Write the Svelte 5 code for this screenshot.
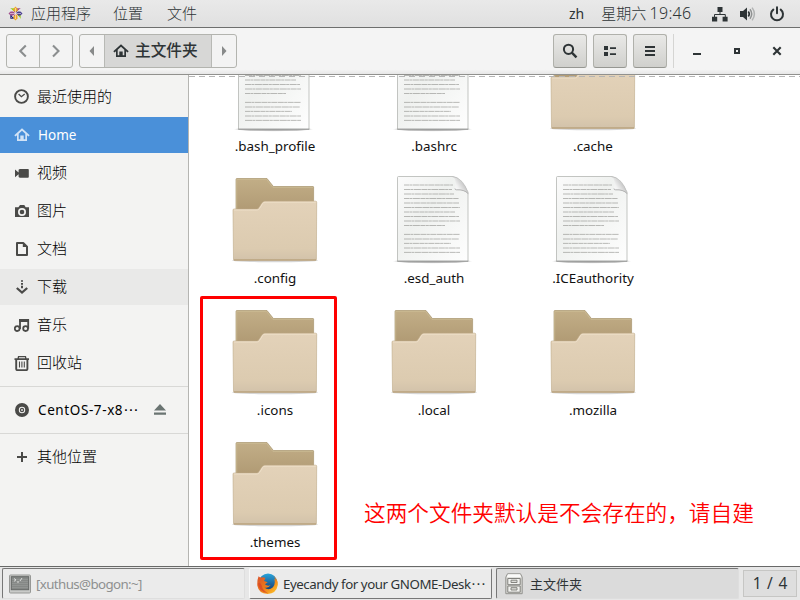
<script>
  const places = [
    { icon: 'recent', label: '最近使用的' },
    { icon: 'home', label: 'Home', active: true, latin: true },
    { icon: 'video', label: '视频' },
    { icon: 'camera', label: '图片' },
    { icon: 'doc', label: '文档' },
    { icon: 'download', label: '下载', hover: true },
    { icon: 'music', label: '音乐' },
    { icon: 'trash', label: '回收站' }
  ];
  const files = [
    { name: '.bash_profile', type: 'text' },
    { name: '.bashrc', type: 'text' },
    { name: '.cache', type: 'folder' },
    { name: '.config', type: 'folder' },
    { name: '.esd_auth', type: 'text' },
    { name: '.ICEauthority', type: 'text' },
    { name: '.icons', type: 'folder' },
    { name: '.local', type: 'folder' },
    { name: '.mozilla', type: 'folder' },
    { name: '.themes', type: 'folder' }
  ];
  const lines = [
    [15, 67], [19.5, 66], [24, 68], [28.5, 73], [33, 73], [37.5, 74], [42, 69], [46.5, 73], [51, 74], [55.5, 59],
    [64.4, 74], [69, 73], [73.4, 65], [78, 74], [82.4, 74]
  ];
</script>

{#snippet homeShape()}
  <path d="M8 1.2 0.3 8.3l1.2 1.3L3 8.3V14h10V8.3l1.5 1.3 1.2-1.3zM8 3.8l3.3 3V12.3H9.7V8.6H6.3v3.7H4.7V6.8z" fill-rule="evenodd" />
{/snippet}

{#snippet icon(name)}
  <svg class="ic" viewBox="0 0 16 16" width="16" height="16">
    {#if name === 'recent'}
      <circle cx="7.5" cy="7.5" r="6.4" fill="none" stroke="currentColor" stroke-width="1.9" />
      <path d="M4.6 5.1 7.4 7.7 10.7 5" fill="none" stroke="currentColor" stroke-width="1.3" />
    {:else if name === 'home'}
      {@render homeShape()}
    {:else if name === 'video'}
      <path d="M1 4.6 4.6 7.6V4.8L5.8 4H14q.8 0 .8.8v7q0 .9-.8.9H5.8l-1.2-.8V9.3L1 12.2z" />
    {:else if name === 'camera'}
      <path fill-rule="evenodd" d="M1 4.2h3.4L6 2h4.3l1.4 2.2H15V14H1zM8 5a4 4 0 1 0 0 8 4 4 0 0 0 0-8zm0 1.7a2.3 2.3 0 1 1 0 4.6 2.3 2.3 0 0 1 0-4.6z" />
    {:else if name === 'doc'}
      <path d="M3 1.9h6.2L13 5.7v8.4H3z" fill="none" stroke="currentColor" stroke-width="2" stroke-linejoin="round" />
      <path d="M8.8 1.5v4.5h4.5z" />
    {:else if name === 'download'}
      <path d="M7 1.2h2v1.6H7zM7 4h2v1.7H7zM7 6.8h2v2.4H7z" />
      <path d="M2.8 9 8 13.5 13.2 9" fill="none" stroke="currentColor" stroke-width="2.3" />
    {:else if name === 'music'}
      <path d="M6 12V3h8.2v8.8" fill="none" stroke="currentColor" stroke-width="1.8" />
      <path d="M5.1 2H15v3H5.1z" />
      <circle cx="3.2" cy="11.6" r="2.4" fill="none" stroke="currentColor" stroke-width="1.8" />
      <circle cx="11.6" cy="11.6" r="2.4" fill="none" stroke="currentColor" stroke-width="1.8" />
    {:else if name === 'trash'}
      <path d="M.5 3.2h3L4 1h8l.5 2.2h2.5V5H.5zM5 2.2v1h6v-1z" fill-rule="evenodd" />
      <path d="M2.2 5v9q0 1.1 1 1.1h9.2q1 0 1-1.1V5" fill="none" stroke="currentColor" stroke-width="1.9" />
      <path d="M5.5 6.5v6M7.9 6.5v6M10.3 6.5v6" stroke="currentColor" stroke-width="1.1" />
    {:else if name === 'disc'}
      <path fill-rule="evenodd" d="M8 1a7 7 0 1 0 0 14A7 7 0 0 0 8 1zm0 3.8a3.2 3.2 0 1 1 0 6.4 3.2 3.2 0 0 1 0-6.4z" />
      <circle cx="8" cy="8" r="2.2" />
      <circle cx="8" cy="8" r="1" fill="#ddd" />
    {:else if name === 'plus'}
      <path d="M7 3h2v4h4v2H9v4H7V9H3V7h4z" />
    {/if}
  </svg>
{/snippet}

{#snippet folder()}
  <svg width="96" height="96" viewBox="0 0 96 96">
    <ellipse cx="48" cy="90.5" rx="43" ry="1.8" fill="#000" opacity=".16" />
    <path d="M9 41V9.4q0-.9.9-.9H40l6.4 8H86q.6 0 .6.6V41z" fill="url(#backFill)" stroke="#a8956f" stroke-width=".7" />
    <path d="M9.7 40V9.4H39.6l6.3 8H86" fill="none" stroke="#cdbd97" stroke-width=".7" />
    <path d="M6 40q0-1 1-1h22.6q1.4 0 2.2-1.2l3.2-5q1-1.6 2.6-1.6H88.7q1 0 1 1L89.4 89.4q0 1-1 1H7.5q-1 0-1-1z" fill="url(#frontFill)" stroke="#bda987" stroke-width=".6" />
    <path d="M6.9 40h23.3q1.4 0 2.4-1.6l3-4.8q.9-1.4 2.4-1.4h50.7" fill="none" stroke="#efe1cb" stroke-width=".9" />
    <path d="M7 89.9h82" stroke="#b59d75" stroke-width="1" />
  </svg>
{/snippet}

{#snippet textfile()}
  <svg width="96" height="96" viewBox="0 0 96 96">
    <ellipse cx="46.5" cy="91.2" rx="40" ry="2.4" fill="url(#softShadow)" />
    <path d="M11.5 7.5q0-1 1-1H67q8 1 15 15.5V91.2H11.5z" fill="url(#paper)" stroke="#b4b6b2" stroke-width=".8" />
    <path d="M11.3 91.2h71" stroke="#8a8a8a" stroke-width=".8" />
    {#each lines as [y, x2], i}
      <path d="M18 {y}H{x2}" stroke="#74746f" stroke-width=".9" opacity=".52" stroke-dasharray="{5 + (i % 3)} .4 3 .5 {6 + (i % 2)} .5" />
    {/each}
    <path d="M66.500 6.500Q71 10 69 18.500q0 1.500 1.500 1.300 7.500-.5 11.800 3.800Q78 10 66.500 6.500z" fill="url(#curl)" />
    <path d="M69 18.500q0 1.500 1.500 1.300 7.500-.5 11.700 3.800" fill="none" stroke="#a0a0a0" stroke-width=".8" />
    <path d="M66 6.500Q78 8 82 23.600" fill="none" stroke="#bdbdbd" stroke-width=".6" />
  </svg>
{/snippet}

<svg class="defs" width="0" height="0">
  <defs>
    <linearGradient id="backFill" x1="0" y1="0" x2="0" y2="1"><stop offset="0" stop-color="#c2ae87" /><stop offset="1" stop-color="#b09a74" /></linearGradient>
    <linearGradient id="frontFill" x1="0" y1="0" x2="0" y2="1"><stop offset="0" stop-color="#e3d2b9" /><stop offset=".8" stop-color="#dccbb0" /><stop offset="1" stop-color="#d2c2aa" /></linearGradient>
    <linearGradient id="paper" x1="0" y1="0" x2="1" y2="1"><stop offset="0" stop-color="#fbfbfb" /><stop offset=".4" stop-color="#eff1ef" /><stop offset="1" stop-color="#fefefe" /></linearGradient>
    <linearGradient id="curl" x1="0" y1="1" x2="1" y2=".3"><stop offset="0" stop-color="#fff" /><stop offset=".4" stop-color="#f2f2f2" /><stop offset="1" stop-color="#a8a8a8" /></linearGradient>
    <radialGradient id="softShadow"><stop offset="0" stop-color="#000" stop-opacity=".4" /><stop offset=".8" stop-color="#000" stop-opacity=".22" /><stop offset="1" stop-color="#000" stop-opacity="0" /></radialGradient>
  </defs>
</svg>

<div class="desktop">
  <div class="topbar">
    <svg class="logo" width="15" height="15" viewBox="0 0 15 15">
      <path d="M2.3 2.3H7v4.8z" fill="#9ccd2a" /><path d="M7.8 2.3h4.9L7.8 7.1z" fill="#a14f8c" />
      <path d="M2.3 7.9V12.7H7z" fill="#262577" /><path d="M8 8l4.7 4.7V8z" fill="#9ccd2a" />
      <path d="M7.5 .5 9.5 2.7V7h-4V2.7z" fill="#efa724" /><path d="M14.5 7.5 12.4 9.5H8v-4h4.4z" fill="#4a3f8e" />
      <path d="M7.5 14.5 5.5 12.4V8h4v4.4z" fill="#efa724" /><path d="M.5 7.5 2.6 5.5H7v4H2.6z" fill="#a14f8c" />
      <path d="M3.2 3.2l8.6 8.6M11.8 3.2l-8.6 8.6M7.5 2v11M2 7.5h11" stroke="#f4e9f2" stroke-width=".6" />
    </svg>
    <span class="apps">应用程序</span>
    <span class="loc">位置</span>
    <span>文件</span>
    <div class="grow"></div>
    <span class="lang">zh</span>
    <span class="clock">星期六 <b>19:46</b></span>
    <svg class="net" width="16" height="16" viewBox="0 0 16 16">
      <path d="M5.5 1h5v5h-5zM0 10.7h5.2V15.6H0zM10.6 10.7h5V15.6h-5z" />
      <path d="M8 5v3.5M2.5 11V8.5h10.8V11" fill="none" stroke="currentColor" />
    </svg>
    <svg class="vol" width="16" height="16" viewBox="0 0 16 16">
      <path d="M0 5h3l4-3.6v13L3 11H0z" />
      <path d="M8.3 5.4q2 2.5 0 5.2" fill="none" stroke="currentColor" stroke-width="1.6" />
      <path d="M10 3.3q3.4 4.7 0 9.4" fill="none" stroke="#8f9292" stroke-width="1.5" />
      <path d="M12.1 1.6q4.6 6.4 0 12.8" fill="none" stroke="#b1b3b3" stroke-width="1.5" />
    </svg>
    <svg width="16" height="16" viewBox="0 0 16 16">
      <path d="M4.3 3.6a6 6 0 1 0 7.4 0" fill="none" stroke="currentColor" stroke-width="2" stroke-linecap="round" />
      <path d="M8 1.2v6" stroke="currentColor" stroke-width="2" stroke-linecap="round" />
    </svg>
  </div>

  <div class="header">
    <div class="group nav">
      <div><svg width="16" height="16" viewBox="0 0 16 16"><path d="M10.8 2.5 5.3 8l5.5 5.5" fill="none" stroke="#8b8e8f" stroke-width="2.1" /></svg></div>
      <div><svg width="16" height="16" viewBox="0 0 16 16"><path d="M5 2.5 10.5 8 5 13.5" fill="none" stroke="#8b8e8f" stroke-width="2.1" /></svg></div>
    </div>
    <div class="group path">
      <div><svg width="10" height="12" viewBox="0 0 10 12"><path d="M7 1v10L2.5 6z" fill="#888a8a" /></svg></div>
      <div class="here"><svg width="16" height="16" viewBox="0 0 16 16">{@render homeShape()}</svg><span>主文件夹</span></div>
      <div><svg width="10" height="12" viewBox="0 0 10 12"><path d="M3 1v10L7.5 6z" fill="#888a8a" /></svg></div>
    </div>
    <div class="grow"></div>
    <div class="btn"><svg width="16" height="16" viewBox="0 0 16 16"><circle cx="6.5" cy="6.3" r="4.6" fill="none" stroke="currentColor" stroke-width="2" /><path d="M9.8 9.7 14.5 14.4" stroke="currentColor" stroke-width="2.4" /></svg></div>
    <div class="btn"><svg width="16" height="16" viewBox="0 0 16 16"><path d="M2 3h4v4H2zM2 9h4v4H2zM8 4.2h6v1.8H8zM8 10.2h6V12H8z" /></svg></div>
    <div class="btn"><svg width="16" height="16" viewBox="0 0 16 16"><path d="M3 3h10v2H3zM3 7h10v2H3zM3 11h10v2H3z" /></svg></div>
    <div class="vsep"></div>
    <div class="win"><svg width="16" height="16" viewBox="0 0 16 16"><path d="M4 10h8v2H4z" /></svg></div>
    <div class="win"><svg width="16" height="16" viewBox="0 0 16 16"><path d="M5 5h6v6H5zM7 7v2h2V7z" fill-rule="evenodd" /></svg></div>
    <div class="win"><svg width="16" height="16" viewBox="0 0 16 16"><path d="M4.3 4.3l7.4 7.4M11.7 4.3l-7.4 7.4" stroke="currentColor" stroke-width="2.1" /></svg></div>
  </div>

  <div class="main">
    <div class="sidebar">
      {#each places as p}
        <div class="row" class:active={p.active} class:hover={p.hover}>
          {@render icon(p.icon)}<span class:latin={p.latin}>{p.label}</span>
        </div>
      {/each}
      <div class="line"></div>
      <div class="row">
        {@render icon('disc')}<span class="latin centos">CentOS-7-x8</span><i>⋯</i>
        <svg class="eject" width="14" height="14" viewBox="0 0 14 14"><path d="M7 1 13 7.5H1zM1 9.5h12v2.2H1z" fill="#6a7472" /></svg>
      </div>
      <div class="line"></div>
      <div class="row">{@render icon('plus')}<span>其他位置</span></div>
    </div>
    <div class="view">
      <div class="grid">
        {#each files as f}
          <div class="cell">
            {#if f.type === 'folder'}{@render folder()}{:else}{@render textfile()}{/if}
            <span>{f.name}</span>
          </div>
        {/each}
      </div>
      <div class="overshoot"></div>
      <div class="mark"></div>
      <div class="note">这两个文件夹默认是不会存在的，请自建</div>
    </div>
  </div>

  <div class="taskbar">
    <div class="task sunk dim">
      <svg width="22" height="20" viewBox="0 0 22 20">
        <rect x=".5" y="1" width="21" height="18" rx="1" fill="#c9cac8" stroke="#979896" />
        <rect x="2.3" y="2.7" width="17.4" height="13" fill="#858886" stroke="#656866" />
        <path d="M3 5.5h16M3 7.5h16M3 9.5h16M3 11.5h16M3 13.5h16" stroke="#999c9a" stroke-width=".6" />
        <path d="M5 4.5l2 1.4-2 1.4M8 8h2M11 7l2-3" fill="none" stroke="#e4e5e4" stroke-width=".9" />
      </svg>
      <span class="term">[xuthus@bogon:~]</span>
    </div>
    <div class="task raised">
      <svg width="21" height="21" viewBox="0 0 20 20">
        <defs>
          <linearGradient id="globe" x1="0" y1="0" x2="0" y2="1"><stop offset="0" stop-color="#28a5dc" /><stop offset="1" stop-color="#16356f" /></linearGradient>
          <linearGradient id="fox" x1="0" y1="0" x2="1" y2="1"><stop offset="0" stop-color="#d9502c" /><stop offset=".5" stop-color="#ee7a1a" /><stop offset="1" stop-color="#ffce2b" /></linearGradient>
        </defs>
        <circle cx="10.5" cy="9" r="8.6" fill="url(#globe)" />
        <path d="M1.500 3q1 1.300 2.500 1.300 2-.5 4 .5L6.700 7.500l3.500 1.200-2.700 2q2.500 2.300 5.500.7-2.500 3.600-6 2.400 4 3.600 8.200-.3Q18 10 16.300 5.500q1 .6 1.600 1.800Q17.500 4.500 15.500 2.600 20.300 6 19.800 11.400 18.500 19.500 10 20 1.500 19.500.3 12 0 6.500 1.500 3z" fill="url(#fox)" />
        <path d="M1 10q1 8.500 9.500 9.300Q5 16.500 4.500 12L2.700 9z" fill="#d6422a" opacity=".7" />
      </svg>
      <span class="eye">Eyecandy for your GNOME-Desk</span><i>⋯</i>
    </div>
    <div class="task sunk current">
      <svg width="18" height="22" viewBox="0 0 18 22">
        <path d="M2.500.800h13l1.700 3.400v16.500H.800V4.200z" fill="#d8d8d4" stroke="#92928e" />
        <path d="M3 1.300h12l1.300 3H1.700z" fill="#fafaf9" />
        <path d="M2.800 5.500h12.400v6.200H2.800zM2.800 13h12.400v6.200H2.800z" fill="#f2f2ef" stroke="#81817d" />
        <path d="M6 7.200h6v2.300H6zM6 14.700h6V17H6z" fill="#dcdcd8" stroke="#7a7b76" stroke-width=".9" />
      </svg>
      <span class="cur">主文件夹</span>
    </div>
    <div class="pager">1 / 4</div>
  </div>
</div>

<style>
  :global(body) { margin: 0; overflow: hidden; }
  .desktop { width: 800px; height: 600px; display: flex; flex-direction: column; overflow: hidden; color: #2e3436; font-family: "Noto Sans", "Noto Sans CJK SC", sans-serif; font-size: 15px; line-height: 20px; white-space: nowrap; }
  .desktop * { box-sizing: border-box; }
  svg { display: block; flex: none; fill: currentColor; }
  .defs { position: absolute; }
  i { font: 15px/20px "DejaVu Sans", sans-serif; }
  .grow { flex: 1; }
  .topbar { height: 28px; flex: none; display: flex; align-items: center; background: linear-gradient(#e9e9e9, #e0e0e0); border-bottom: 1px solid #6e6f6e; padding: 0 15px 0 8px; color: #2e3436; }
  .topbar span { font-weight: 300; font-family: "Noto Sans CJK SC", sans-serif; padding-bottom: 2px; }
  .topbar .apps { margin: 0 22px 0 8px; }
  .topbar .loc { margin-right: 24px; }
  .topbar .lang { margin-right: 17px; font: 14px/20px "Noto Sans", sans-serif; padding-bottom: 0; }
  .clock b { font-weight: 300; font-size: 16px; font-family: "Noto Sans", sans-serif; letter-spacing: .3px; }
  .net { margin: 0 12px 0 20.5px; }
  .vol { margin-right: 13px; }
  .header { height: 47px; flex: none; display: flex; align-items: center; background: linear-gradient(#f4f4f4 0 90%, #e7e7e7); border-bottom: 1px solid #91918e; padding: 0 3px 0 6px; }
  .group { height: 34px; display: flex; border: 1px solid #b3b4af; border-radius: 3px; background: #f3f3f3; overflow: hidden; }
  .group div { display: flex; align-items: center; justify-content: center; }
  .group div + div { border-left: 1px solid #b8b9b5; }
  .nav { width: 67px; margin-right: 6px; }
  .nav div { flex: 1; }
  .path { width: 158px; }
  .path div { width: 24px; flex: none; }
  .path div:last-child { width: 25px; }
  .path .here { width: 107px; background: #d7d7d6; gap: 6px; justify-content: flex-start; padding-left: 8px; }
  .here span { font-size: 15.7px; font-weight: 500; padding-bottom: 2px; }
  .btn { width: 34px; height: 34px; margin-right: 6px; display: flex; align-items: center; justify-content: center; border: 1px solid #b0b1ab; border-bottom-color: #969792; border-radius: 3px; background: linear-gradient(#e9e9e7, #d0d0cd); }
  .vsep { width: 1px; height: 34px; background: #d5d5d3; margin-right: 3px; }
  .win { width: 40px; display: flex; justify-content: center; }
  .main { flex: none; height: 492px; display: flex; border-bottom: 1px solid #686968; }
  .sidebar { width: 189px; flex: none; background: #f3f3f2; border-right: 1px solid #b5b5b2; padding-top: 4px; color: #000; }
  .row { height: 36px; margin-bottom: 2px; padding-left: 14px; display: flex; align-items: center; }
  .row .ic { color: #4a4a48; margin-right: 7px; }
  .row span { padding-bottom: 2px; font-weight: 300; }
  .row .latin { font-size: 13.5px; padding-bottom: 0; font-weight: 400; margin-left: 1px; }
  .row .centos { letter-spacing: .6px; }
  .active { background: #4a90d9; color: #fff; }
  .row.active .ic { color: #d2e3f6; }
  .hover { background: #e9e9e8; }
  .line { height: 1px; background: #d8d8d6; margin: 5px 0; }
  .eject { margin-left: auto; margin-right: 21px; }
  .view { flex: 1; position: relative; overflow: hidden; background: #fff; }
  .grid { display: grid; grid-template-columns: repeat(3, 159px); grid-auto-rows: 132px; padding-left: 6.5px; margin-top: -37px; }
  .cell { display: flex; flex-direction: column; align-items: center; color: #111; font-size: 13.4px; line-height: 24px; }
  .overshoot { position: absolute; top: 1px; left: 0; right: 0; height: 1px; background: repeating-linear-gradient(90deg, #b4b4b4 0 6px, transparent 6px 10px); }
  .mark { position: absolute; left: 11px; top: 221px; width: 137px; height: 264px; border: 3px solid #f00; border-radius: 2px; }
  .note { position: absolute; left: 175px; top: 421px; color: #f00; font: 350 21.67px/32px "Noto Sans CJK SC", sans-serif; }
  .taskbar { flex: 1; display: flex; align-items: center; background: #e7e7e7; padding: 0 3px 0 2px; font-size: 13.3px; }
  .task { width: 243px; height: 31px; display: flex; align-items: center; border-radius: 2px; padding-left: 7px; background: #ebebeb; }
  .sunk { border: 1px solid #dedede; border-top-color: #777; border-left-color: #777; }
  .raised { border: 1px solid #f8f8f8; border-right-color: #777; border-bottom-color: #777; margin: 0 4px; }
  .dim { color: #8e9090; padding-left: 6px; }
  .current { background: #dbdbdb; padding-left: 8px; }
  .task .term { letter-spacing: -.6px; margin-left: 5px; }
  .task .eye { letter-spacing: -.45px; margin-left: 5px; }
  .task .cur { font-size: 13px; margin-left: 7px; }
  .pager { width: 54px; height: 27px; margin-left: 4px; border: 1px solid #c6c6c4; background: #dedede; font-size: 15.5px; line-height: 24px; text-align: center; word-spacing: 1.5px; }
</style>
